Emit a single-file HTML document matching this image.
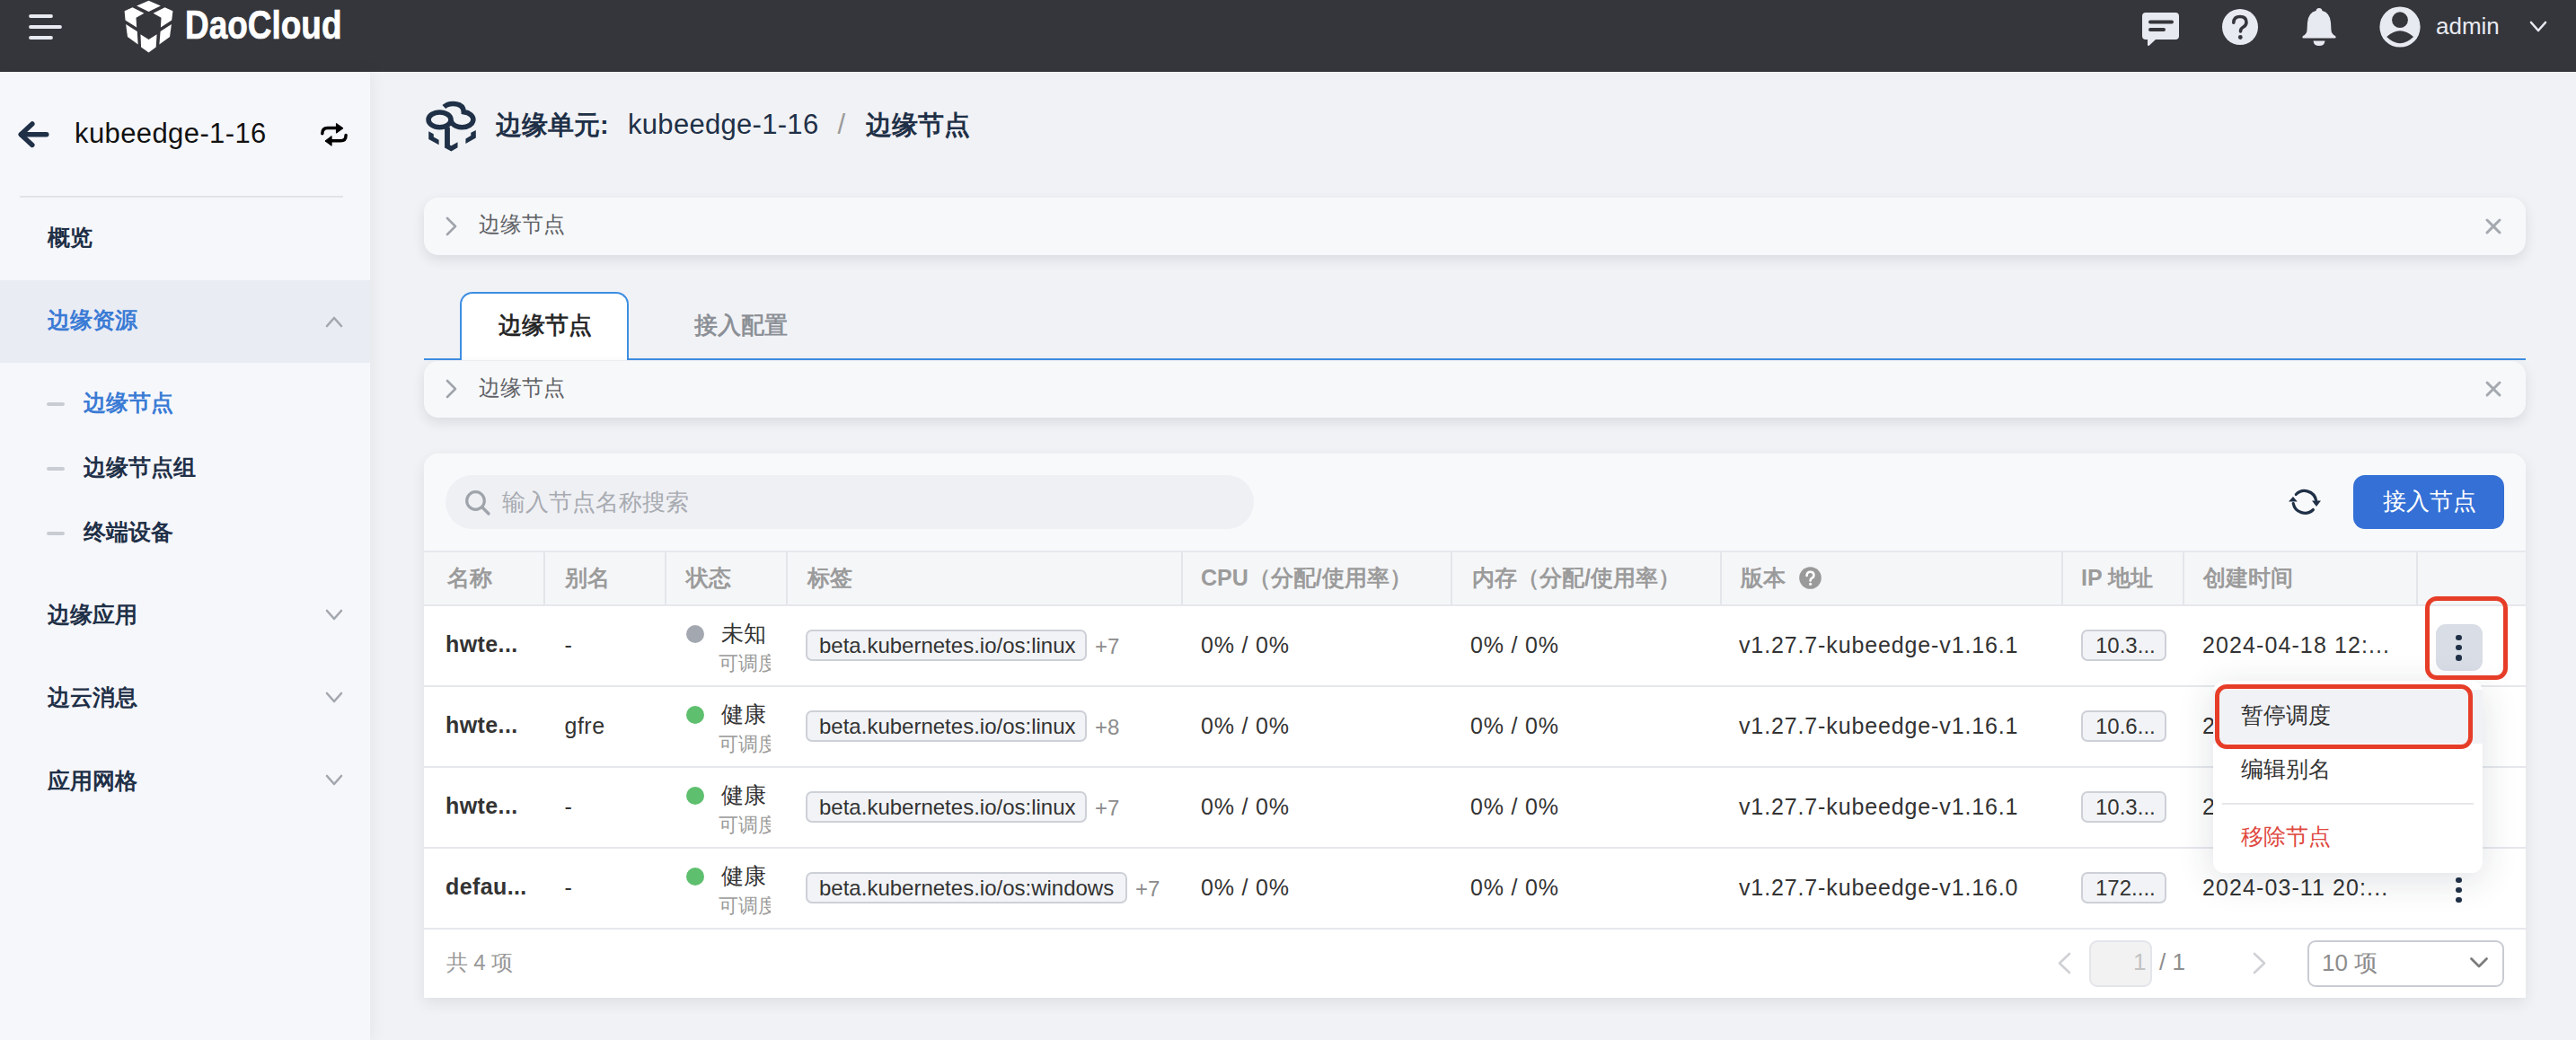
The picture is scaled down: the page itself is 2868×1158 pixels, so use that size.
<!DOCTYPE html>
<html><head><meta charset="utf-8">
<style>
*{box-sizing:border-box;margin:0;padding:0}
html,body{width:2868px;height:1158px;overflow:hidden}
body{position:relative;font-family:"Liberation Sans",sans-serif;background:#f1f2f5;color:#333}
.a{position:absolute;white-space:nowrap}
svg.a{overflow:visible}
#hdr{left:0;top:0;width:2868px;height:80px;background:#35363b}
#side{left:0;top:80px;width:412px;height:1078px;background:#f6f7fb;box-shadow:2px 0 18px rgba(20,30,50,0.06)}
.sb{font-size:25px;line-height:25px;color:#1f3047;font-weight:bold}
.sb.blue{color:#3a7bd5}
.dash{width:20px;height:4px;border-radius:2px;background:#c9ccd3;left:52px}
.card{background:#f7f8fa;border-radius:16px;box-shadow:0 5px 14px rgba(30,40,60,0.11)}
.th{font-size:25px;line-height:25px;color:#9b9b9b;font-weight:bold;top:630.85px}
.sep{width:2px;background:#e4e6eb;top:675px;height:-2px}
.vsep{width:2px;background:#e3e5ea;top:615px;height:58px}
.hb{background:#e6e8ed;height:2px}
.nm{font-size:25px;line-height:25px;font-weight:bold;color:#333;letter-spacing:0.4px}
.tx{font-size:25px;line-height:25px;color:#333}
.st{font-size:25px;line-height:25px;color:#333}
.sub{font-size:22px;line-height:22px;color:#9c9c9c;width:58px;overflow:hidden}
.dot{width:20px;height:20px;border-radius:10px}
.tag{height:35px;border:2px solid #cdd0d7;background:#f2f3f6;border-radius:7px;font-size:24px;line-height:31px;color:#333;padding-left:13px}
.more{font-size:24px;line-height:24px;color:#8c8c8c}
.mi{font-size:25px;line-height:25px;color:#333}
</style></head><body>
<!-- HEADER -->
<div id="hdr" class="a">
  <svg class="a" style="left:30px;top:14px" width="42" height="32" viewBox="0 0 42 32">
    <g stroke="#e9ebf2" stroke-width="3.8" stroke-linecap="round">
      <line x1="4" y1="4" x2="27" y2="4"/><line x1="4" y1="16" x2="37" y2="16"/><line x1="4" y1="28" x2="27" y2="28"/>
    </g>
  </svg>
  <svg class="a" style="left:130px;top:0" width="70" height="64" viewBox="0 0 1138 1040">
    <g fill="#fff">
      <polygon points="360,105 578,10 795,105 578,212"/>
      <polygon points="140,200 285,135 495,240 350,320 360,495 155,365"/>
      <polygon points="660,240 870,135 1015,200 995,365 795,495 805,320"/>
      <polygon points="165,440 370,570 385,805 195,665"/>
      <polygon points="790,570 990,440 960,665 770,805"/>
      <polygon points="430,620 578,715 725,620 710,855 578,950 440,855"/>
    </g>
  </svg>
  <div class="a" style="left:206px;top:2.5px;font-size:44px;line-height:50px;font-weight:bold;color:#fff;-webkit-text-stroke:0.7px #fff;transform:scaleX(0.84);transform-origin:left top">DaoCloud</div>
  <!-- chat -->
  <svg class="a" style="left:2385px;top:13px" width="42" height="40" viewBox="0 0 42 40">
    <path d="M4,1 H37 Q41,1 41,5 V27 Q41,31 37,31 H15 L8,37.5 Q6,39 6,36.5 V31 H4 Q0,31 0,27 V5 Q0,1 4,1 Z" fill="#e8eaf2"/>
    <line x1="9" y1="11.5" x2="33" y2="11.5" stroke="#35363b" stroke-width="4" stroke-linecap="round"/>
    <line x1="9" y1="20" x2="24" y2="20" stroke="#35363b" stroke-width="4" stroke-linecap="round"/>
  </svg>
  <!-- help -->
  <svg class="a" style="left:2474px;top:10px" width="40" height="40" viewBox="0 0 40 40">
    <circle cx="20" cy="20" r="20" fill="#e8eaf2"/>
    <path d="M12.8,15.2 Q13,8.5 20,8.5 Q27,8.5 27,14.8 Q27,18.5 23,20.5 Q20.5,22 20.5,25" fill="none" stroke="#35363b" stroke-width="3.6" stroke-linecap="round"/>
    <circle cx="20.3" cy="31.5" r="2.4" fill="#35363b"/>
  </svg>
  <!-- bell -->
  <svg class="a" style="left:2563px;top:9px" width="38" height="42" viewBox="0 0 38 42">
    <path d="M19,0 Q22,0 22.5,3 Q31,5 32,16 L32.5,25 Q33,29 37,31 Q38.5,33 36.5,33.5 H1.5 Q-0.5,33 1,31 Q5,29 5.5,25 L6,16 Q7,5 15.5,3 Q16,0 19,0 Z" fill="#e8eaf2"/>
    <path d="M12.5,36.5 H25.5 Q25,42 19,42 Q13,42 12.5,36.5 Z" fill="#e8eaf2"/>
  </svg>
  <!-- user -->
  <svg class="a" style="left:2644px;top:2px" width="56" height="56" viewBox="0 0 1040 1040">
    <circle cx="520" cy="520" r="420" fill="#e8eaf2"/>
    <circle cx="520" cy="375" r="165" fill="#35363b"/>
    <path d="M245,725 Q520,475 800,725 Q520,995 245,725 Z" fill="#35363b"/>
  </svg>
  <div class="a" style="left:2712px;top:15.5px;font-size:26px;line-height:26px;color:#e8eaf2">admin</div>
  <svg class="a" style="left:2816px;top:23px" width="20" height="14" viewBox="0 0 20 14">
    <polyline points="2,2 10,11 18,2" fill="none" stroke="#e8eaf2" stroke-width="2.6" stroke-linecap="round" stroke-linejoin="round"/>
  </svg>
</div>

<!-- SIDEBAR -->
<div id="side" class="a"></div>
<svg class="a" style="left:14px;top:120px" width="50" height="60" viewBox="0 0 50 60">
  <polyline points="21.9,17.9 9.2,29.7 21.9,41.5" fill="none" stroke="#1f3047" stroke-width="5.4" stroke-linecap="round" stroke-linejoin="round"/>
  <line x1="9.5" y1="29.7" x2="37.8" y2="29.7" stroke="#1f3047" stroke-width="5.4" stroke-linecap="round"/>
</svg>
<div class="a" style="left:83px;top:133.2px;font-size:31px;line-height:31px;color:#111;letter-spacing:0.4px">kubeedge-1-16</div>
<svg class="a" style="left:348px;top:125px" width="50" height="50" viewBox="0 0 1040 1040">
  <path d="M225,495 Q225,365 345,365 H570" fill="none" stroke="#000" stroke-width="72" stroke-linecap="round"/>
  <polygon points="550,258 708,370 550,482" fill="#000" stroke="#000" stroke-width="20" stroke-linejoin="round"/>
  <path d="M772,530 Q772,662 650,662 H430" fill="none" stroke="#000" stroke-width="72" stroke-linecap="round"/>
  <polygon points="440,552 290,665 440,775" fill="#000" stroke="#000" stroke-width="20" stroke-linejoin="round"/>
</svg>
<div class="a" style="left:22px;top:217.5px;width:360px;height:2.5px;background:#e1e3e8"></div>
<div class="a sb" style="left:52.5px;top:252.25px">概览</div>
<div class="a" style="left:0;top:312px;width:412px;height:92px;background:#eaecf4"></div>
<div class="a sb blue" style="left:52.5px;top:343.95px">边缘资源</div>
<svg class="a" style="left:362px;top:351px" width="20" height="14" viewBox="0 0 20 14">
  <polyline points="2,12 10,3 18,12" fill="none" stroke="#a3a7ae" stroke-width="2.6" stroke-linecap="round" stroke-linejoin="round"/>
</svg>
<div class="a dash" style="top:448px"></div>
<div class="a sb blue" style="left:93px;top:436.25px">边缘节点</div>
<div class="a dash" style="top:520px"></div>
<div class="a sb" style="left:93px;top:508.25px">边缘节点组</div>
<div class="a dash" style="top:592px"></div>
<div class="a sb" style="left:93px;top:580.25px">终端设备</div>
<div class="a sb" style="left:52.5px;top:671.85px">边缘应用</div>
<svg class="a" style="left:362px;top:678px" width="20" height="14" viewBox="0 0 20 14">
  <polyline points="2,2 10,11 18,2" fill="none" stroke="#a3a7ae" stroke-width="2.6" stroke-linecap="round" stroke-linejoin="round"/>
</svg>
<div class="a sb" style="left:52.5px;top:764.25px">边云消息</div>
<svg class="a" style="left:362px;top:770px" width="20" height="14" viewBox="0 0 20 14">
  <polyline points="2,2 10,11 18,2" fill="none" stroke="#a3a7ae" stroke-width="2.6" stroke-linecap="round" stroke-linejoin="round"/>
</svg>
<div class="a sb" style="left:52.5px;top:856.55px">应用网格</div>
<svg class="a" style="left:362px;top:862px" width="20" height="14" viewBox="0 0 20 14">
  <polyline points="2,2 10,11 18,2" fill="none" stroke="#a3a7ae" stroke-width="2.6" stroke-linecap="round" stroke-linejoin="round"/>
</svg>

<!-- TITLE -->
<svg class="a" style="left:468px;top:108px" width="70" height="64" viewBox="0 0 1138 1040">
  <g fill="none" stroke="#1f3047" stroke-width="90">
    <ellipse cx="350" cy="412" rx="203" ry="137"/>
    <path d="M428,180 C520,95 780,90 785,270 A202,140 0 1 1 553,412" stroke-linejoin="miter"/>
  </g>
  <g fill="#1f3047">
    <polygon points="440,525 535,548 535,870 560,882 675,815 675,915 560,982 440,920"/>
    <polygon points="150,620 240,670 240,725 335,775 335,865 150,765"/>
    <polygon points="1005,600 1005,740 820,845 820,755 915,700 915,645"/>
  </g>
</svg>
<div class="a" style="left:552px;top:124.9px;font-size:29px;line-height:29px;font-weight:bold;color:#1f3047">边缘单元:</div>
<div class="a" style="left:699px;top:123.2px;font-size:31px;line-height:31px;color:#1f3047;letter-spacing:0.3px">kubeedge-1-16</div>
<div class="a" style="left:932.5px;top:123.2px;font-size:31px;line-height:31px;color:#9a9a9a">/</div>
<div class="a" style="left:963.5px;top:124.9px;font-size:29px;line-height:29px;font-weight:bold;color:#1f3047">边缘节点</div>

<!-- COLLAPSE 1 -->
<div class="a card" style="left:472px;top:220px;width:2340px;height:64px"></div>
<svg class="a" style="left:494px;top:240px" width="16" height="24" viewBox="0 0 16 24">
  <polyline points="4,3 13,12 4,21" fill="none" stroke="#a0a4ab" stroke-width="2.6" stroke-linecap="round" stroke-linejoin="round"/>
</svg>
<div class="a" style="left:532.5px;top:238px;font-size:24px;line-height:24px;color:#606266">边缘节点</div>
<svg class="a" style="left:2766px;top:242px" width="20" height="20" viewBox="0 0 20 20">
  <g stroke="#a5a9b0" stroke-width="3" stroke-linecap="round"><line x1="3" y1="3" x2="17" y2="17"/><line x1="17" y1="3" x2="3" y2="17"/></g>
</svg>

<!-- TABS -->
<div class="a" style="left:472px;top:399px;width:2340px;height:2px;background:#3d8ee2"></div>
<div class="a" style="left:512px;top:325px;width:188px;height:76px;background:#fff;border:2.5px solid #3d8ee2;border-bottom:none;border-radius:14px 14px 0 0"></div>
<div class="a" style="left:554.5px;top:348.7px;font-size:26px;line-height:26px;color:#222;-webkit-text-stroke:0.7px #222">边缘节点</div>
<div class="a" style="left:772.5px;top:348.7px;font-size:26px;line-height:26px;color:#8a8e95;-webkit-text-stroke:0.7px #8a8e95">接入配置</div>

<!-- COLLAPSE 2 -->
<div class="a card" style="left:472px;top:402px;width:2340px;height:63px"></div>
<svg class="a" style="left:494px;top:421px" width="16" height="24" viewBox="0 0 16 24">
  <polyline points="4,3 13,12 4,21" fill="none" stroke="#a0a4ab" stroke-width="2.6" stroke-linecap="round" stroke-linejoin="round"/>
</svg>
<div class="a" style="left:532.5px;top:419.5px;font-size:24px;line-height:24px;color:#606266">边缘节点</div>
<svg class="a" style="left:2766px;top:423px" width="20" height="20" viewBox="0 0 20 20">
  <g stroke="#a5a9b0" stroke-width="3" stroke-linecap="round"><line x1="3" y1="3" x2="17" y2="17"/><line x1="17" y1="3" x2="3" y2="17"/></g>
</svg>

<!-- TABLE CARD -->
<div class="a" style="left:472px;top:505px;width:2340px;height:606px;background:#fff;border-radius:16px 16px 0 0;box-shadow:0 6px 16px rgba(30,40,60,0.09)"></div>
<div class="a" style="left:472px;top:505px;width:2340px;height:108px;background:#f8f9fb;border-radius:16px 16px 0 0"></div>
<div class="a" style="left:496px;top:529px;width:900px;height:60px;background:#eff0f4;border-radius:30px"></div>
<svg class="a" style="left:516px;top:544px" width="32" height="32" viewBox="0 0 32 32">
  <circle cx="13.5" cy="13.5" r="9.8" fill="none" stroke="#9fa4ab" stroke-width="3.2"/>
  <line x1="20.8" y1="20.8" x2="28" y2="28" stroke="#9fa4ab" stroke-width="3.4" stroke-linecap="round"/>
</svg>
<div class="a" style="left:558.5px;top:545.7px;font-size:26px;line-height:26px;color:#a8abb1">输入节点名称搜索</div>
<svg class="a" style="left:2546px;top:539px" width="40" height="40" viewBox="0 0 40 40">
  <path d="M10.3,11.5 A13.2,13.2 0 0 1 32.6,18" fill="none" stroke="#1f3047" stroke-width="3.2" stroke-linecap="round"/>
  <path d="M29.4,28.5 A13.2,13.2 0 0 1 7.2,21.5" fill="none" stroke="#1f3047" stroke-width="3.2" stroke-linecap="round"/>
  <polygon points="2,19.5 7,14 11.8,19.5" fill="#1f3047"/>
  <polygon points="28,18.5 38,18.5 33,25" fill="#1f3047"/>
</svg>
<div class="a" style="left:2620px;top:529px;width:168px;height:60px;background:#3470d6;border-radius:13px"></div>
<div class="a" style="left:2652.5px;top:545.2px;font-size:26px;line-height:26px;color:#fff">接入节点</div>

<!-- TABLE HEADER -->
<div class="a" style="left:472px;top:613px;width:2340px;height:62px;background:#f5f6f8"></div>
<div class="a hb" style="left:472px;top:613px;width:2340px"></div>
<div class="a hb" style="left:472px;top:673px;width:2340px"></div>
<div class="a vsep" style="left:605px"></div>
<div class="a vsep" style="left:740px"></div>
<div class="a vsep" style="left:875px"></div>
<div class="a vsep" style="left:1315px"></div>
<div class="a vsep" style="left:1615px"></div>
<div class="a vsep" style="left:1915px"></div>
<div class="a vsep" style="left:2295px"></div>
<div class="a vsep" style="left:2430px"></div>
<div class="a vsep" style="left:2690px"></div>
<div class="a th" style="left:497.5px">名称</div>
<div class="a th" style="left:628.5px">别名</div>
<div class="a th" style="left:763.5px">状态</div>
<div class="a th" style="left:898.5px">标签</div>
<div class="a th" style="left:1337.0px">CPU（分配/使用率）</div>
<div class="a th" style="left:1639.0px">内存（分配/使用率）</div>
<div class="a th" style="left:1938.0px">版本</div>
<svg class="a" style="left:2003px;top:631px" width="25" height="25" viewBox="0 0 25 25">
  <circle cx="12.5" cy="12.5" r="12.3" fill="#9a9a9a"/>
  <path d="M8.6,10 Q8.6,5.8 12.6,5.8 Q16.4,5.8 16.4,9.4 Q16.4,11.6 14,12.8 Q12.6,13.6 12.6,15.4" fill="none" stroke="#fff" stroke-width="2.6" stroke-linecap="round"/>
  <circle cx="12.6" cy="19.3" r="1.6" fill="#fff"/>
</svg>
<div class="a th" style="left:2317.0px">IP 地址</div>
<div class="a th" style="left:2452.5px">创建时间</div>

<!-- ROWS -->
<div class="a" style="left:472px;top:675px;width:2340px;height:88px;background:#fff"></div>
<div class="a hb" style="left:472px;top:763px;width:2340px"></div>
<div class="a nm" style="left:496px;top:705.2px">hwte...</div>
<div class="a tx" style="left:628.5px;top:706.40px">-</div>
<div class="a dot" style="left:764px;top:696px;background:#a3a8b0"></div>
<div class="a st" style="left:802.5px;top:692.85px">未知</div>
<div class="a sub" style="left:799.5px;top:727.5px">可调度</div>
<div class="a tag" style="left:897px;top:701px;width:313px">beta.kubernetes.io/os:linux</div>
<div class="a more" style="left:1219px;top:707.5px">+7</div>
<div class="a tx" style="left:1337px;top:706.40px;letter-spacing:0.8px">0% / 0%</div>
<div class="a tx" style="left:1637px;top:706.40px;letter-spacing:0.8px">0% / 0%</div>
<div class="a tx" style="left:1936px;top:706.40px;letter-spacing:0.87px">v1.27.7-kubeedge-v1.16.1</div>
<div class="a tag" style="left:2317px;top:701px;width:95px;padding-left:14px">10.3...</div>
<div class="a tx" style="left:2452px;top:706.40px;letter-spacing:1.1px">2024-04-18 12:...</div>
<div class="a" style="left:472px;top:765px;width:2340px;height:88px;background:#fff"></div>
<div class="a hb" style="left:472px;top:853px;width:2340px"></div>
<div class="a nm" style="left:496px;top:795.2px">hwte...</div>
<div class="a tx" style="left:628.5px;top:796.40px"><span style="letter-spacing:0.5px">gfre</span></div>
<div class="a dot" style="left:764px;top:786px;background:#5ebf6e"></div>
<div class="a st" style="left:802.5px;top:782.85px">健康</div>
<div class="a sub" style="left:799.5px;top:817.5px">可调度</div>
<div class="a tag" style="left:897px;top:791px;width:313px">beta.kubernetes.io/os:linux</div>
<div class="a more" style="left:1219px;top:797.5px">+8</div>
<div class="a tx" style="left:1337px;top:796.40px;letter-spacing:0.8px">0% / 0%</div>
<div class="a tx" style="left:1637px;top:796.40px;letter-spacing:0.8px">0% / 0%</div>
<div class="a tx" style="left:1936px;top:796.40px;letter-spacing:0.87px">v1.27.7-kubeedge-v1.16.1</div>
<div class="a tag" style="left:2317px;top:791px;width:95px;padding-left:14px">10.6...</div>
<div class="a tx" style="left:2452px;top:796.40px;letter-spacing:1.1px">2024-04-18 12:...</div>
<div class="a" style="left:472px;top:855px;width:2340px;height:88px;background:#fff"></div>
<div class="a hb" style="left:472px;top:943px;width:2340px"></div>
<div class="a nm" style="left:496px;top:885.2px">hwte...</div>
<div class="a tx" style="left:628.5px;top:886.40px">-</div>
<div class="a dot" style="left:764px;top:876px;background:#5ebf6e"></div>
<div class="a st" style="left:802.5px;top:872.85px">健康</div>
<div class="a sub" style="left:799.5px;top:907.5px">可调度</div>
<div class="a tag" style="left:897px;top:881px;width:313px">beta.kubernetes.io/os:linux</div>
<div class="a more" style="left:1219px;top:887.5px">+7</div>
<div class="a tx" style="left:1337px;top:886.40px;letter-spacing:0.8px">0% / 0%</div>
<div class="a tx" style="left:1637px;top:886.40px;letter-spacing:0.8px">0% / 0%</div>
<div class="a tx" style="left:1936px;top:886.40px;letter-spacing:0.87px">v1.27.7-kubeedge-v1.16.1</div>
<div class="a tag" style="left:2317px;top:881px;width:95px;padding-left:14px">10.3...</div>
<div class="a tx" style="left:2452px;top:886.40px;letter-spacing:1.1px">2024-04-18 12:...</div>
<div class="a" style="left:472px;top:945px;width:2340px;height:88px;background:#fff"></div>
<div class="a hb" style="left:472px;top:1033px;width:2340px"></div>
<div class="a nm" style="left:496px;top:975.2px">defau...</div>
<div class="a tx" style="left:628.5px;top:976.40px">-</div>
<div class="a dot" style="left:764px;top:966px;background:#5ebf6e"></div>
<div class="a st" style="left:802.5px;top:962.85px">健康</div>
<div class="a sub" style="left:799.5px;top:997.5px">可调度</div>
<div class="a tag" style="left:897px;top:971px;width:358px">beta.kubernetes.io/os:windows</div>
<div class="a more" style="left:1264px;top:977.5px">+7</div>
<div class="a tx" style="left:1337px;top:976.40px;letter-spacing:0.8px">0% / 0%</div>
<div class="a tx" style="left:1637px;top:976.40px;letter-spacing:0.8px">0% / 0%</div>
<div class="a tx" style="left:1936px;top:976.40px;letter-spacing:0.87px">v1.27.7-kubeedge-v1.16.0</div>
<div class="a tag" style="left:2317px;top:971px;width:95px;padding-left:14px">172....</div>
<div class="a tx" style="left:2452px;top:976.40px;letter-spacing:1.1px">2024-03-11 20:...</div>
<div class="a" style="left:2712px;top:695px;width:52px;height:52px;background:#d9dde6;border-radius:11px"></div>
<div class="a" style="left:2734.3999999999996px;top:706.5px;width:6.6px;height:6.6px;border-radius:50%;background:#1f3047"></div>
<div class="a" style="left:2734.3999999999996px;top:717.9000000000001px;width:6.6px;height:6.6px;border-radius:50%;background:#1f3047"></div>
<div class="a" style="left:2734.3999999999996px;top:729.3000000000001px;width:6.6px;height:6.6px;border-radius:50%;background:#1f3047"></div>
<div class="a" style="left:2734.3999999999996px;top:976.5px;width:6.6px;height:6.6px;border-radius:50%;background:#1f3047"></div>
<div class="a" style="left:2734.3999999999996px;top:987.6px;width:6.6px;height:6.6px;border-radius:50%;background:#1f3047"></div>
<div class="a" style="left:2734.3999999999996px;top:998.7px;width:6.6px;height:6.6px;border-radius:50%;background:#1f3047"></div>
<div class="a hb" style="left:472px;top:1033px;width:2340px"></div>
<div class="a" style="left:496.5px;top:1060px;font-size:24px;line-height:24px;color:#999">共 4 项</div>
<svg class="a" style="left:2288px;top:1058px" width="20" height="30" viewBox="0 0 20 30"><polyline points="16,4 5,14.5 16,25" fill="none" stroke="#cfd1d5" stroke-width="2.6" stroke-linecap="round" stroke-linejoin="round"/></svg>
<div class="a" style="left:2326px;top:1047px;width:70px;height:52px;background:#f2f2f3;border:2px solid #e3e5ea;border-radius:9px"></div>
<div class="a" style="left:2375px;top:1058px;font-size:26px;line-height:26px;color:#c2c2c2">1</div>
<div class="a" style="left:2404px;top:1058px;font-size:26px;line-height:26px;color:#8d8d8d">/ 1</div>
<svg class="a" style="left:2506px;top:1058px" width="20" height="30" viewBox="0 0 20 30"><polyline points="4,4 15,14.5 4,25" fill="none" stroke="#cfd1d5" stroke-width="2.6" stroke-linecap="round" stroke-linejoin="round"/></svg>
<div class="a" style="left:2568.5px;top:1047px;width:219px;height:52px;background:#fff;border:2px solid #c9ccd3;border-radius:9px"></div>
<div class="a" style="left:2585px;top:1059px;font-size:26px;line-height:26px;color:#8d8d8d">10 项</div>
<svg class="a" style="left:2748px;top:1063px" width="24" height="18" viewBox="0 0 24 18"><polyline points="3.5,4.5 12,13 20.5,4.5" fill="none" stroke="#7c7c7c" stroke-width="2.8" stroke-linecap="round" stroke-linejoin="round"/></svg>
<div class="a" style="left:2464px;top:758px;width:300px;height:214px;background:#fff;border-radius:12px;box-shadow:0 8px 40px rgba(30,40,60,0.14)"></div>
<div class="a" style="left:2464px;top:768px;width:300px;height:60px;background:#f1f2f6"></div>
<div class="a mi" style="left:2495px;top:784.35px">暂停调度</div>
<div class="a mi" style="left:2495px;top:844.25px">编辑别名</div>
<div class="a" style="left:2474px;top:894px;width:280px;height:2px;background:#e6e7eb"></div>
<div class="a mi" style="left:2495px;top:919.25px;color:#e0483e">移除节点</div>
<div class="a" style="left:2700px;top:664px;width:92px;height:93px;border:5.5px solid #e63d28;border-radius:13px"></div>
<div class="a" style="left:2466px;top:762px;width:287px;height:72px;border:5.5px solid #e63d28;border-radius:13px"></div>
</body></html>
